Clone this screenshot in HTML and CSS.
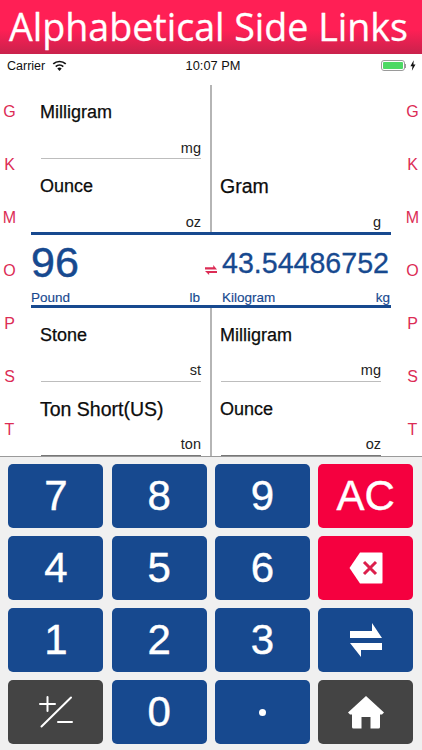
FILE: index.html
```html
<!DOCTYPE html>
<html lang="en">
<head>
<meta charset="utf-8">
<title>Alphabetical Side Links</title>
<link rel="stylesheet" href="styles.css">
</head>
<body>
<header class="banner">Alphabetical Side Links</header>
<div class="status">
  <div class="status-left">
    <span>Carrier</span>
    <svg class="wifi" viewBox="0 0 16 12" width="15" height="11"><path d="M8 12 5.600 9.200a3.600 3.600 0 0 1 4.800 0z" fill="#111"/><path d="M3.900 7.200a6 6 0 0 1 8.200 0" fill="none" stroke="#111" stroke-width="1.900"/><path d="M1.200 4.300a10 10 0 0 1 13.600 0" fill="none" stroke="#111" stroke-width="1.900"/></svg>
  </div>
  <div class="status-time">10:07 PM</div>
  <div class="status-right">
    <span class="battery"><span class="battery-fill"></span></span>
    <span class="battery-tip"></span>
    <svg viewBox="0 0 7 12" width="6" height="11"><path d="M4.300 0 0.500 6.800h2.400L2.200 12l4.200-7.200H4z" fill="#111"/></svg>
  </div>
</div>
<main class="converter">
  <nav class="letters"><span>G</span><span>K</span><span>M</span><span>O</span><span>P</span><span>S</span><span>T</span></nav>
  <div class="center">
    <section class="list">
      <div class="list-col">
        <div class="cell lined"><div class="name">Milligram</div><div class="unit">mg</div></div>
        <div class="cell"><div class="name">Ounce</div><div class="unit">oz</div></div>
      </div>
      <div class="list-col right">
        <div class="cell"></div>
        <div class="cell"><div class="name large">Gram</div><div class="unit">g</div></div>
      </div>
    </section>
    <section class="display">
      <div class="values">
        <span class="value-big">96</span>
        <svg class="swap-mini" viewBox="0 0 32 34" width="12" height="10" preserveAspectRatio="none"><path d="M22 0 32 15H0V8H22z" fill="#dc2c55"/><path d="M0 20H32V27H11V34z" fill="#dc2c55"/></svg>
        <span class="value">43.54486752</span>
      </div>
      <div class="labels">
        <div class="label left"><span>Pound</span><span>lb</span></div>
        <div class="label"><span>Kilogram</span><span>kg</span></div>
      </div>
    </section>
    <section class="list lower">
      <div class="list-col">
        <div class="cell lined"><div class="name">Stone</div><div class="unit">st</div></div>
        <div class="cell lined dark"><div class="name large">Ton Short(US)</div><div class="unit">ton</div></div>
      </div>
      <div class="list-col right">
        <div class="cell lined"><div class="name">Milligram</div><div class="unit">mg</div></div>
        <div class="cell lined dark"><div class="name">Ounce</div><div class="unit">oz</div></div>
      </div>
    </section>
  </div>
  <nav class="letters"><span>G</span><span>K</span><span>M</span><span>O</span><span>P</span><span>S</span><span>T</span></nav>
</main>
<section class="keypad">
  <button class="key">7</button>
  <button class="key">8</button>
  <button class="key">9</button>
  <button class="key red ac">AC</button>
  <button class="key">4</button>
  <button class="key">5</button>
  <button class="key">6</button>
  <button class="key red" aria-label="Backspace"><svg viewBox="0 0 34 32" width="34" height="32"><path d="M11 0.500H32.500a1 1 0 0 1 1 1V30.500a1 1 0 0 1-1 1H11L0.500 16z" fill="#fff"/><path d="M15 10 27 22M27 10 15 22" stroke="#dc1f4c" stroke-width="3" fill="none"/></svg></button>
  <button class="key">1</button>
  <button class="key">2</button>
  <button class="key">3</button>
  <button class="key" aria-label="Swap"><svg viewBox="0 0 32 34" width="32" height="34"><path d="M22 0 32 15H0V8H22z" fill="#fff"/><path d="M0 20H32V27H11V34z" fill="#fff"/></svg></button>
  <button class="key gray" aria-label="Plus minus"><svg viewBox="0 0 34 32" width="34" height="32"><path d="M1 8H16M8.500 1V15M19 26H33M2.500 30.500 32 1.500" stroke="#fff" stroke-width="2" fill="none" stroke-linecap="round"/></svg></button>
  <button class="key">0</button>
  <button class="key dot" aria-label="Decimal point"><span></span></button>
  <button class="key gray" aria-label="Home"><svg viewBox="0 0 36 33" width="36" height="33"><path d="M18 0 36 16.500 34 18.500H32V31a1.500 1.500 0 0 1-1.500 1.500H22.500V21h-9V32.500H5.500A1.500 1.500 0 0 1 4 31V18.500H2L0 16.500z" fill="#fff"/></svg></button>
</section>
</body>
</html>
```
FILE: styles.css
```css
* { box-sizing: border-box; }
html, body { margin: 0; padding: 0; }
body {
  width: 422px;
  height: 750px;
  overflow: hidden;
  background: #fff;
  font-family: "Liberation Sans", Arial, sans-serif;
  color: #111;
}
.banner {
  height: 54px;
  padding-left: 9px;
  background: linear-gradient(#ff1f55 0, #ff1f55 55%, #c9224c 100%);
  color: #fff;
  font-family: "Open Sans", "Noto Sans", sans-serif;
  font-size: 37.600px;
  line-height: 54px;
  -webkit-text-stroke: 0.300px #fff;
  white-space: nowrap;
}
.status {
  height: 22px;
  padding: 1px 6px 0 7px;
  display: grid;
  grid-template-columns: 1fr auto 1fr;
  align-items: center;
  font-size: 12.500px;
}
.status-left { display: flex; align-items: center; gap: 7px; }
.status-time { font-size: 12.800px; padding-left: 3px; }
.status-right { display: flex; align-items: center; justify-content: flex-end; }
.battery {
  width: 24px;
  height: 11px;
  border: 1px solid #9a9a9a;
  border-radius: 3px;
  padding: 1px;
  display: block;
}
.battery-fill { display: block; height: 100%; background: #4cd964; border-radius: 1px; }
.battery-tip { width: 1px; height: 4px; background: #9a9a9a; margin-right: 4px; }
.converter {
  height: 380px;
  padding-top: 9px;
  display: grid;
  grid-template-columns: 31px 360px 31px;
}
.letters {
  display: grid;
  grid-template-rows: repeat(7, 53px);
  align-items: center;
  justify-items: center;
  color: #dc2c55;
  font-size: 16px;
  height: 371px;
}
.letters span { position: relative; left: -6px; }
.letters:last-child span { left: 6px; }
.center { display: flex; flex-direction: column; }
.list { display: grid; grid-template-columns: 180px 180px; height: 147px; }
.list.lower { height: 148px; }
.list-col { border-right: 2px solid #b5b5b5; margin-right: -1px; padding: 0 9px 0 10px; width: 181px; }
.list-col.right { border-right: 0; padding: 0 10px; width: 180px; }
.cell { height: 74px; display: flex; flex-direction: column; justify-content: space-between; padding-top: 17px; border-bottom: 1px solid transparent; }
.list-col .cell.lined { border-bottom-color: #bdbdbd; }
.cell.dark.lined { border-bottom-color: #777; }
.name { font-size: 18px; line-height: 20px; color: #0c0c0c; margin-left: -1px; -webkit-text-stroke: 0.250px #0c0c0c; }
.name.large { font-size: 19.500px; }
.unit { font-size: 14.500px; line-height: 17px; text-align: right; padding-bottom: 1px; color: #222; }
.lower .unit { padding-bottom: 2px; }
.display {
  height: 76px;
  border-top: 3px solid #17498f;
  border-bottom: 3px solid #17498f;
  color: #17498f;
  display: flex;
  flex-direction: column;
  justify-content: space-between;
}
.values { display: flex; align-items: flex-end; height: 52px; }
.value-big { font-size: 43px; line-height: 50px; width: 174px; -webkit-text-stroke: 0.500px #17498f; }
.swap-mini { width: 12px; margin: 0 5px 12px 0; }
.value { font-size: 28.600px; line-height: 44px; margin-bottom: 2px; -webkit-text-stroke: 0.300px #17498f; white-space: nowrap; }
.labels { display: grid; grid-template-columns: 178px 1fr; font-size: 13.500px; line-height: 16px; margin-bottom: -1px; -webkit-text-stroke: 0.150px #17498f; }
.label { display: flex; justify-content: space-between; padding: 0 1px 0 13px; }
.label.left { padding: 0 9px 0 0; }
.keypad {
  height: 294px;
  background: #f0f0f0;
  border-top: 1px solid #9a9a9a;
  padding: 7px 8px 6px 8.400px;
  display: grid;
  grid-template-columns: repeat(4, 95px);
  grid-template-rows: repeat(4, 64px);
  gap: 8px 8.300px;
}
.key {
  border: 0;
  padding: 0;
  border-radius: 5px;
  background: #17498f;
  color: #fff;
  font-family: "Liberation Sans", Arial, sans-serif;
  font-size: 42px;
  -webkit-text-stroke: 0.400px #fff;
  display: flex;
  align-items: center;
  justify-content: center;
}
.key.red { background: #f5003f; }
.key.gray { background: #444; }
.key.dot span { width: 7px; height: 7px; border-radius: 50%; background: #fff; }
```
